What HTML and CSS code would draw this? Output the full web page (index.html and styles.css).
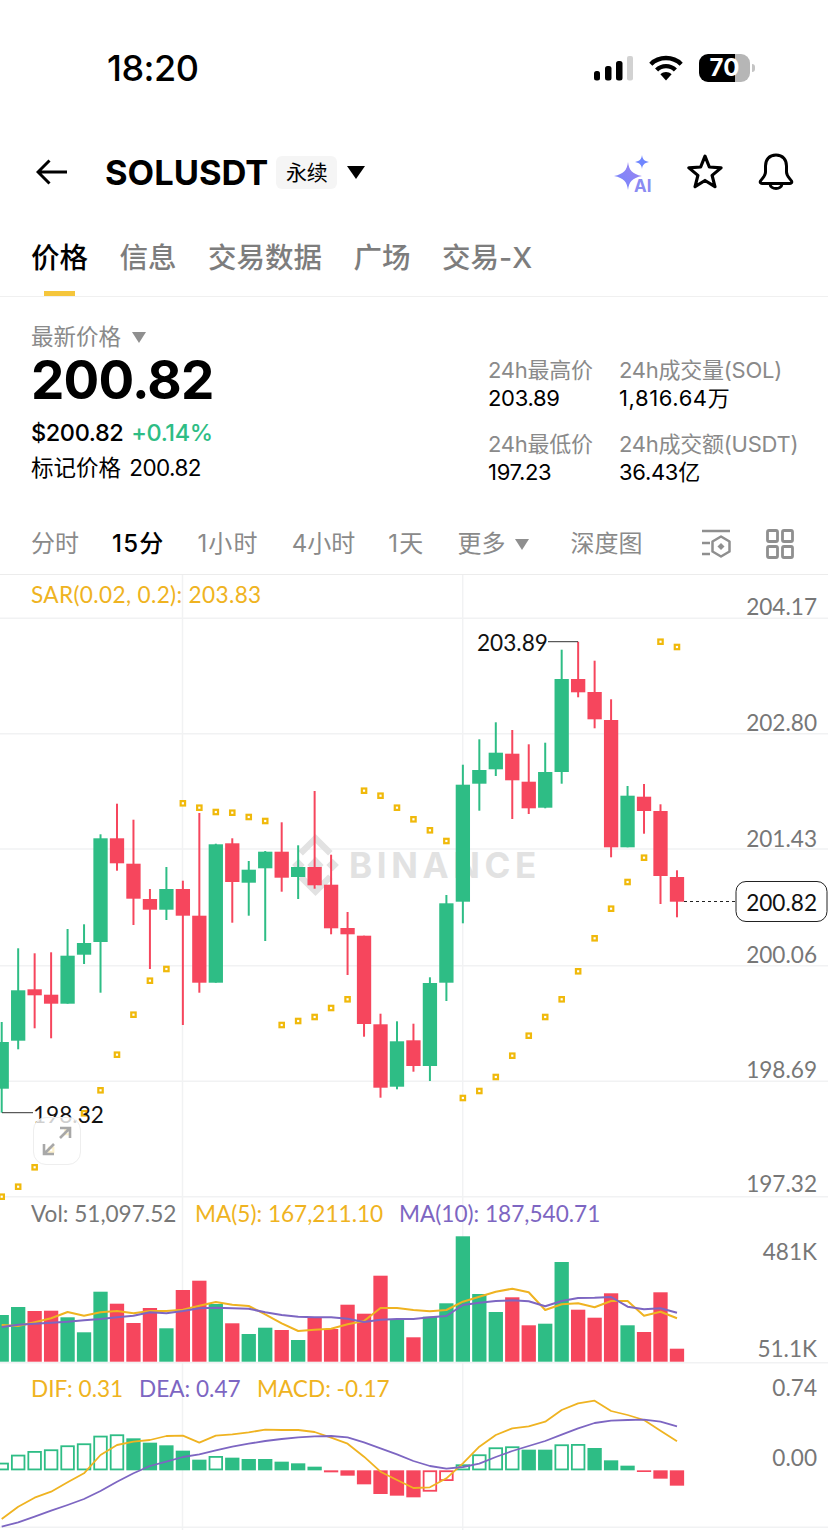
FILE: index.html
```html
<!DOCTYPE html>
<html lang="zh-CN">
<head>
    <meta charset="UTF-8">
    <meta name="viewport" content="width=device-width, initial-scale=1.0">
    <title>SOLUSDT 永续</title>
    <link rel="stylesheet" href="styles.css">
</head>
<body>
    <div class="status-bar">
        <span class="clock">18:20</span>
        <div class="status-icons">
            <svg class="signal" width="39" height="25" viewBox="0 0 39 25">
                <rect x="0" y="15" width="6" height="9.5" rx="2.5" fill="#000"/>
                <rect x="11" y="10" width="6.5" height="14.5" rx="2.5" fill="#000"/>
                <rect x="22" y="5" width="6.5" height="19.5" rx="2.5" fill="#000"/>
                <rect x="33" y="0" width="6" height="24.5" rx="2" fill="#d2d2d2"/>
            </svg>
            <svg class="wifi" width="34" height="26" viewBox="0 0 34 26">
                <path d="M1.8 9.2C10 1 24 1 32.2 9.2" fill="none" stroke="#000" stroke-width="4.4"/>
                <path d="M7.6 15C12.8 9.8 21.2 9.8 26.4 15" fill="none" stroke="#000" stroke-width="4.4"/>
                <path d="M11.4 19.2C14.6 16.2 19.4 16.2 22.6 19.2L17 25.6Z" fill="#000"/>
            </svg>
            <div class="battery"><span>70</span></div>
        </div>
    </div>

    <div class="nav">
        <svg class="back" width="32" height="26" viewBox="0 0 32 26">
            <path d="M31 13H2M13.5 1.5L2 13L13.5 24.5" fill="none" stroke="#000" stroke-width="3"/>
        </svg>
        <span class="symbol">SOLUSDT</span>
        <span class="badge">永续</span>
        <span class="caret caret-black"></span>
        <div class="nav-actions">
            <svg class="ai-icon" width="40" height="48" viewBox="0 -6 40 48">
                <defs>
                    <linearGradient id="aiFill" x1="0" y1="1" x2="1" y2="0">
                        <stop offset="0" stop-color="#6f86ff"/>
                        <stop offset="1" stop-color="#a283ee"/>
                    </linearGradient>
                </defs>
                <path d="M15 8C16 16 19 20 29 22C19 24 16 28 15 36C14 28 11 24 1 22C11 20 14 16 15 8Z" fill="url(#aiFill)"/>
                <path d="M29 1C29.6 5 31 7 36 8C31 9 29.6 11 29 15C28.4 11 27 9 22 8C27 7 28.4 5 29 1Z" fill="#6f86ff"/>
                <text x="21" y="38" class="ai-text">AI</text>
            </svg>
            <svg class="star" width="36" height="36" viewBox="0 0 34 34">
                <path d="M17 2L21.1 12.3L32.2 13.1L23.7 20.2L26.4 30.9L17 25L7.6 30.9L10.3 20.2L1.8 13.1L12.9 12.3Z" fill="none" stroke="#000" stroke-width="3" stroke-linejoin="round"/>
            </svg>
            <svg class="bell" width="36" height="38" viewBox="0 0 36 38">
                <path d="M18 2C11 2 7.5 7 7.5 13V19C7.5 23 4.5 25 2.5 28C1.8 29.5 2.5 30.5 4 30.5H32C33.5 30.5 34.2 29.5 33.5 28C31.5 25 28.5 23 28.5 19V13C28.5 7 25 2 18 2Z" fill="none" stroke="#000" stroke-width="3" stroke-linejoin="round"/>
                <path d="M12 31C12.5 37 23.5 37 24 31" fill="none" stroke="#000" stroke-width="3"/>
            </svg>
        </div>
    </div>

    <div class="tabs">
        <div class="tab active">价格</div>
        <div class="tab">信息</div>
        <div class="tab">交易数据</div>
        <div class="tab">广场</div>
        <div class="tab">交易-X</div>
    </div>

    <div class="price-section">
        <div class="price-left">
            <div class="price-label">最新价格 <span class="caret caret-gray"></span></div>
            <div class="last-price">200.82</div>
            <div class="usd-line"><span>$200.82</span> <span class="up">+0.14%</span></div>
            <div class="mark-line">标记价格 <span class="mark-value">200.82</span></div>
        </div>
        <div class="stats">
            <div class="stat"><div class="stat-label">24h最高价</div><div class="stat-value">203.89</div></div>
            <div class="stat"><div class="stat-label">24h成交量(SOL)</div><div class="stat-value volume-value">1,816.64万</div></div>
            <div class="stat"><div class="stat-label">24h最低价</div><div class="stat-value">197.23</div></div>
            <div class="stat"><div class="stat-label">24h成交额(USDT)</div><div class="stat-value">36.43亿</div></div>
        </div>
    </div>

    <div class="intervals">
        <span class="interval">分时</span>
        <span class="interval active spaced">15分</span>
        <span class="interval spaced">1小时</span>
        <span class="interval">4小时</span>
        <span class="interval spaced">1天</span>
        <span class="interval">更多</span>
        <span class="caret caret-gray"></span>
        <span class="interval depth">深度图</span>
        <div class="interval-icons">
            <svg width="30" height="30" viewBox="0 0 30 30">
                <path d="M1 2H29M1 14H9M1 25H9" fill="none" stroke="#8f8f8f" stroke-width="2.5"/>
                <path d="M20 7.5L28.5 12.5V22.5L20 27.5L11.5 22.5V12.5Z" fill="none" stroke="#8f8f8f" stroke-width="2.5" stroke-linejoin="round"/>
                <rect x="17.5" y="15" width="5" height="5" transform="rotate(45 20 17.5)" fill="#8f8f8f"/>
            </svg>
            <svg width="28" height="30" viewBox="0 0 28 30">
                <rect x="1.5" y="1.5" width="10" height="11" rx="1.5" fill="none" stroke="#8f8f8f" stroke-width="2.8"/>
                <rect x="16.5" y="1.5" width="10" height="11" rx="1.5" fill="none" stroke="#8f8f8f" stroke-width="2.8"/>
                <rect x="1.5" y="17.5" width="10" height="11" rx="1.5" fill="none" stroke="#8f8f8f" stroke-width="2.8"/>
                <rect x="16.5" y="17.5" width="10" height="11" rx="1.5" fill="none" stroke="#8f8f8f" stroke-width="2.8"/>
            </svg>
        </div>
    </div>

    <div class="chart-wrap">
        <svg id="chart" class="chart" width="828" height="955" viewBox="0 575 828 955"></svg>
        <div class="expand-btn">
            <svg width="32" height="32" viewBox="0 0 32 32">
                <path d="M19 3H29V13M29 3L19 13M3 19V29H13M3 29L13 19" fill="none" stroke="#a8a8a8" stroke-width="2.6"/>
            </svg>
        </div>
    </div>

    <script src="chart.js"></script>
</body>
</html>
```

FILE: styles.css
```css
* {
    margin: 0;
    padding: 0;
    box-sizing: border-box;
}

body {
    width: 828px;
    height: 1530px;
    overflow: hidden;
    background: #fff;
    color: #000;
    font-family: 'Inter', 'Noto Sans CJK SC', sans-serif;
}

/* Status bar */
.status-bar {
    display: flex;
    justify-content: space-between;
    align-items: center;
    height: 136px;
    padding: 0 78px 0 107px;
}

.clock {
    font-size: 36px;
    font-weight: 500;
    letter-spacing: -0.5px;
}

.status-icons {
    display: flex;
    align-items: center;
    gap: 16px;
}

.battery {
    position: relative;
    width: 51px;
    height: 28px;
    border-radius: 9px;
    background: linear-gradient(90deg, #000 70.5%, #b6b6b6 70.5%);
    color: #fff;
    font-size: 24px;
    font-weight: 700;
    line-height: 28px;
    text-align: center;
}

.battery::after {
    content: '';
    position: absolute;
    left: 53px;
    top: 10px;
    width: 3px;
    height: 8px;
    border-radius: 0 3px 3px 0;
    background: #c4c4c4;
}

/* Nav row */
.nav {
    display: flex;
    align-items: center;
    height: 72px;
    padding: 0 34px 0 36px;
}

.back {
    margin-right: 37px;
}

.symbol {
    font-size: 34.5px;
    font-weight: 700;
}

.badge {
    margin-left: 8px;
    padding: 0 9.5px;
    height: 33px;
    line-height: 33px;
    border-radius: 6px;
    background: #f5f5f5;
    font-size: 21px;
}

.nav-actions {
    display: flex;
    align-items: center;
    margin-left: auto;
    gap: 35px;
}

.ai-icon {
    margin-right: -1px;
    overflow: visible;
}

.ai-text {
    font-size: 17px;
    font-weight: 700;
    font-family: 'Inter', sans-serif;
    fill: #8b8cf2;
}

.caret {
    display: inline-block;
    width: 0;
    height: 0;
    border-style: solid;
    border-color: transparent;
}

.caret-black {
    margin-left: 10px;
    border-width: 13px 9px 0;
    border-top-color: #000;
}

.caret-gray {
    border-width: 11px 7px 0;
    border-top-color: #8f8f8f;
}

/* Tabs */
.tabs {
    display: flex;
    gap: 31.5px;
    height: 89px;
    padding: 30px 31px 0;
    border-bottom: 1px solid #f0f0f0;
}

.tab {
    position: relative;
    height: 40px;
    line-height: 40px;
    font-size: 28.5px;
    font-weight: 500;
    color: #7d7d7d;
    white-space: nowrap;
}

.tab.active {
    color: #000;
}

.tab.active::after {
    content: '';
    position: absolute;
    left: 13px;
    top: 53px;
    width: 31px;
    height: 5px;
    background: #f5c63c;
}

/* Price block */
.price-section {
    display: flex;
    justify-content: space-between;
    height: 189px;
    padding: 24px 0 0 31px;
}

.price-label {
    height: 32px;
    line-height: 32px;
    font-size: 22.5px;
    color: #8a8a8a;
}

.price-label .caret {
    margin-left: 5px;
    vertical-align: 2px;
}

.last-price {
    height: 54px;
    line-height: 54px;
    font-size: 53px;
    font-weight: 700;
    letter-spacing: -0.8px;
}

.usd-line {
    margin-top: 9px;
    height: 34px;
    line-height: 34px;
    font-size: 23.5px;
    font-weight: 500;
    letter-spacing: -0.4px;
}

.up {
    margin-left: 2px;
    color: #2ebd85;
}

.mark-line {
    height: 36px;
    line-height: 36px;
    font-size: 22.5px;
}

.mark-value {
    margin-left: 2px;
    letter-spacing: -0.6px;
}

.stats {
    display: grid;
    grid-template-columns: 131px 209px;
    grid-auto-rows: 56px;
    row-gap: 18px;
    margin-top: 35px;
}

.stat-label,
.stat-value {
    height: 28px;
    line-height: 28px;
    font-size: 22px;
    white-space: nowrap;
}

.stat-label {
    color: #8a8a8a;
    letter-spacing: -0.25px;
}

.stat-value {
    letter-spacing: -0.3px;
}

.volume-value {
    letter-spacing: 0.6px;
}

/* Interval selector */
.intervals {
    display: flex;
    align-items: center;
    gap: 33px;
    height: 89px;
    padding: 40px 34px 12px 31px;
    border-bottom: 1px solid #ececec;
}

.interval {
    height: 36px;
    line-height: 36px;
    font-size: 24px;
    color: #8a8a8a;
    white-space: nowrap;
}

.interval.spaced {
    letter-spacing: 1.2px;
}

.interval.active {
    color: #000;
    font-weight: 500;
}

.intervals .caret {
    margin-left: -23px;
}

.interval.depth {
    margin-left: 8px;
}

.interval-icons {
    display: flex;
    align-items: center;
    gap: 35px;
    margin-left: auto;
}

/* Chart */
.chart-wrap {
    position: relative;
    height: 955px;
}

.chart {
    display: block;
}

.chart text {
    font-family: 'Lato', sans-serif;
    font-size: 22.6px;
    dominant-baseline: central;
}

.chart .axis-label {
    fill: #777;
    text-anchor: end;
}

.chart .extreme-label {
    fill: #111;
}

.chart .sar-legend {
    letter-spacing: 0.35px;
}

.chart .watermark {
    font-family: 'Inter', sans-serif;
    font-size: 35px;
    font-weight: 700;
    letter-spacing: 4.6px;
    fill: #e2e2e2;
}

.expand-btn {
    position: absolute;
    left: 33px;
    top: 542px;
    display: flex;
    align-items: center;
    justify-content: center;
    width: 48px;
    height: 48px;
    border: 1px solid #eeeeee;
    border-radius: 13px;
    background: rgba(255, 255, 255, 0.8);
}
```

FILE: chart.js
```js
var GREEN = '#2ebd85';
var RED = '#f6465d';
var YELLOW = '#f0b90b';
var ORANGE = '#efb321';
var PURPLE = '#7d66c2';
var GRID = '#f1f2f3';

// [up, wick top, body top, body bottom, wick bottom]
var candles = [
    [1, 1022, 1042, 1088.7, 1112.7], [1, 948.3, 990.3, 1040.7, 1049.3], [0, 953.3, 989.3, 995.3, 1028.3],
    [0, 952.3, 994.7, 1003.7, 1038.3], [1, 929, 955.7, 1003.7, 1003.7], [1, 924.3, 943, 954.7, 964],
    [1, 834.3, 838.3, 942, 992.7], [0, 803.7, 838.3, 863.3, 870.7], [0, 819.7, 863.7, 898.7, 925],
    [0, 889, 899, 909.7, 969], [1, 867, 889, 909.7, 920], [0, 880.7, 889, 915.7, 1025],
    [0, 813, 915.7, 982.7, 992.7], [1, 843.7, 844.3, 982.7, 982.7], [0, 838.3, 843.3, 882, 922.7],
    [1, 861, 869.7, 882.7, 915.7], [1, 851, 851.7, 868.3, 941], [0, 822.3, 851.7, 877.7, 891.7],
    [1, 845.3, 867, 877, 899], [0, 791, 867, 885.3, 888.7], [0, 854.7, 884.7, 928.3, 934.3],
    [0, 912, 928, 934.3, 975], [0, 935.7, 935.7, 1024, 1036.7], [0, 1013.7, 1024.3, 1087.7, 1097.7],
    [1, 1021.3, 1041.3, 1086.7, 1089.3], [0, 1023.7, 1040.3, 1066, 1071.7], [1, 977.3, 983, 1066, 1081],
    [1, 895, 903.3, 982.7, 1001], [1, 764.7, 784.7, 901.7, 923.3], [1, 739.3, 770, 783.7, 810.7],
    [1, 722.3, 752.7, 769.3, 776], [0, 730, 753.7, 780.3, 819], [0, 744.3, 781.7, 808.3, 814],
    [1, 742.7, 772, 807.7, 808.3], [1, 649.7, 679, 772, 783.7], [0, 641.7, 679, 692.3, 697.3],
    [0, 660.7, 692, 719.3, 728.3], [0, 699.3, 720, 847.3, 857.3], [1, 786, 795.7, 847.3, 847.3],
    [0, 784, 796.7, 811, 833.7], [0, 804.3, 811, 876, 904], [0, 870.3, 877, 901.7, 917.3]
];

var sar = [1196.7, 1186.7, 1167.3, 1150, 1132, 1113.3, 1090.3, 1054.7, 1014.7, 980.7, 969,
    803.3, 807.7, 812, 812.7, 817, 821, 1025, 1021, 1017, 1008, 999.3, 790.7, 795.7, 807.7, 819.3,
    830.3, 841, 1098, 1091, 1077, 1055.7, 1035.7, 1017, 999.3, 971.3, 938.3, 908.7, 882, 857.7, 641.7, 647];

var volumes = [1315, 1307, 1311, 1310.7, 1317.3, 1332.3, 1291.7, 1303.7, 1323, 1308, 1328.3, 1290, 1280.7, 1304,
    1323.3, 1334, 1327.7, 1330, 1340, 1317.7, 1329, 1304.7, 1313.7, 1275.7, 1319, 1337.3, 1316.7, 1303.3,
    1236.3, 1294, 1312, 1297.3, 1325.3, 1323.7, 1262, 1309.7, 1317.7, 1293.3, 1325.3, 1332, 1292.3, 1348.7];

// read off the 3x crops, so divided by 3 on the way in
var volMa5 = [390, 393, 382, 370, 351, 362, 352, 348, 355, 348, 348, 344, 332, 321, 329, 333, 358, 385, 408, 404, 401,
    388, 378, 339, 339, 345, 349, 345, 320, 305, 290, 281, 292, 345, 328, 325, 337, 318, 318, 362, 350, 370];
var volMa10 = [396, 389, 386, 383, 380, 376, 372, 367, 362, 352, 355, 348, 340, 338, 340, 341, 352, 360, 365, 367, 367,
    371, 381, 374, 372, 372, 367, 363, 330, 323, 318, 316, 319, 334, 318, 309, 308, 306, 335, 343, 340, 353];
var dif = [462, 425, 398, 380, 352, 325, 270, 240, 230, 225, 213, 212, 233, 212, 208, 202, 194, 195, 195, 201, 218,
    236, 275, 320, 345, 369, 367, 340, 295, 245, 210, 190, 184, 170, 135, 115, 107, 138, 150, 165, 197, 229];
var dea = [485, 472, 455, 437, 420, 402, 378, 350, 325, 303, 290, 276, 268, 256, 245, 236, 228, 222, 217, 214, 213,
    217, 232, 250, 268, 288, 303, 311, 306, 296, 276, 258, 243, 228, 209, 190, 174, 167, 165, 164, 170, 184];

// [end in crop px, hollow]
var macd = [[293, 1], [269, 1], [258, 1], [253, 1], [241, 1], [235, 1], [212, 1], [208, 1], [220, 0], [233, 0], [241, 0],
    [257, 0], [284, 0], [273, 1], [278, 0], [282, 0], [282, 0], [290, 0], [295, 0], [305, 0], [322, 0], [332, 0], [358, 0],
    [387, 0], [392, 0], [397, 0], [380, 1], [348, 1], [298, 1], [268, 1], [247, 1], [244, 1], [254, 0], [254, 0], [238, 1],
    [237, 1], [249, 0], [286, 0], [302, 0], [321, 0], [341, 0], [362, 0]];

var svg = document.getElementById('chart');
var out = '';

function cx(i) {
    return 1.7 + 16.47 * i;
}

function line(x1, y1, x2, y2, color, width, extra) {
    out += '<line x1="' + x1 + '" y1="' + y1 + '" x2="' + x2 + '" y2="' + y2 + '" stroke="' + color +
        '" stroke-width="' + width + '"' + (extra || '') + '/>';
}

function rect(x, y, w, h, fill, extra) {
    out += '<rect x="' + x + '" y="' + y + '" width="' + w + '" height="' + h + '" fill="' + fill + '"' + (extra || '') + '/>';
}

function text(x, y, str, attrs) {
    out += '<text x="' + x + '" y="' + y + '" ' + attrs + '>' + str + '</text>';
}

function polyline(values, base, color, width) {
    var pts = values.map(function (v, i) {
        return cx(i).toFixed(1) + ',' + (base + v / 3).toFixed(1);
    });
    out += '<polyline points="' + pts.join(' ') + '" fill="none" stroke="' + color + '" stroke-width="' + width + '" stroke-linejoin="round"/>';
}

// grid
[618.3, 733.7, 849, 965.7, 1081.3, 1196.7, 1362.7, 1527.3].forEach(function (y) {
    line(0, y, 828, y, GRID, 1.5);
});
[182.5, 462.7].forEach(function (x) {
    line(x, 575, x, 1530, GRID, 1.5);
});

// watermark
out += '<g fill="#e2e2e2" transform="translate(315.5 865) scale(0.9) translate(-319 -860.5)">' +
    '<path d="M319 836L305 850L300 845L319 826L338 845L333 850Z"/>' +
    '<path d="M319 885L305 871L300 876L319 895L338 876L333 871Z"/>' +
    '<path d="M319 851L328 860.5L319 870L310 860.5Z"/>' +
    '<path d="M300 853.5L307 860.5L300 867.5L293 860.5Z"/>' +
    '<path d="M338 853.5L345 860.5L338 867.5L331 860.5Z"/></g>';
text(349, 865, 'BINANCE', 'class="watermark"');

// main pane
candles.forEach(function (c, i) {
    var color = c[0] ? GREEN : RED;
    var x = cx(i);
    line(x, c[1], x, c[4], color, 2);
    rect(x - 7.15, c[2], 14.3, c[3] - c[2], color);
});

sar.forEach(function (y, i) {
    rect(cx(i) - 2.2, y - 2.2, 4.4, 4.4, '#fff', ' stroke="' + YELLOW + '" stroke-width="2.2"');
});

// volume pane
volumes.forEach(function (y, i) {
    rect(cx(i) - 7.15, y, 14.3, 1361.7 - y, candles[i][0] ? GREEN : RED);
});
polyline(volMa5, 1195, ORANGE, 2);
polyline(volMa10, 1195, PURPLE, 2);

// macd pane
var zero = 316;
macd.forEach(function (m, i) {
    var green = i < 20 || (i >= 28 && i < 39);
    var color = green ? GREEN : RED;
    var y1 = 1365 + Math.min(m[0], zero) / 3;
    var y2 = 1365 + Math.max(m[0], zero) / 3;
    if (m[1]) {
        rect(cx(i) - 6.3, y1 + 0.9, 12.6, y2 - y1 - 1.8, '#fff', ' stroke="' + color + '" stroke-width="1.8"');
    } else {
        rect(cx(i) - 7.15, y1, 14.3, y2 - y1, color);
    }
});
polyline(dif, 1365, ORANGE, 1.8);
polyline(dea, 1365, PURPLE, 1.8);

// extremes and the last price tag
line(548, 641.7, 578, 641.7, '#333', 1);
text(477, 642, '203.89', 'class="extreme-label"');
line(2, 1112.7, 33, 1112.7, '#333', 1);
text(33, 1114, '198.32', 'class="extreme-label"');
line(684, 901.5, 736, 901.5, '#222', 1, ' stroke-dasharray="3 3"');
rect(736, 881.5, 91, 40, '#fff', ' stroke="#222" stroke-width="1" rx="10"');
text(817, 902, '200.82', 'class="axis-label" style="fill:#111"');

// legends
text(31, 594, 'SAR(0.02, 0.2): 203.83', 'class="sar-legend" fill="' + ORANGE + '"');
text(31, 1213, 'Vol: 51,097.52', 'fill="#777"');
text(195, 1213, 'MA(5): 167,211.10', 'fill="' + ORANGE + '"');
text(399, 1213, 'MA(10): 187,540.71', 'fill="' + PURPLE + '"');
text(31, 1388, 'DIF: 0.31', 'fill="' + ORANGE + '"');
text(139, 1388, 'DEA: 0.47', 'fill="' + PURPLE + '"');
text(257, 1388, 'MACD: -0.17', 'fill="' + ORANGE + '"');

// axis labels
[[606, '204.17'], [722, '202.80'], [838, '201.43'], [954, '200.06'], [1069, '198.69'], [1183, '197.32'],
    [1251, '481K'], [1348, '51.1K'], [1387, '0.74'], [1457, '0.00']].forEach(function (a) {
    text(817, a[0], a[1], 'class="axis-label"');
});

svg.innerHTML = out;
```
